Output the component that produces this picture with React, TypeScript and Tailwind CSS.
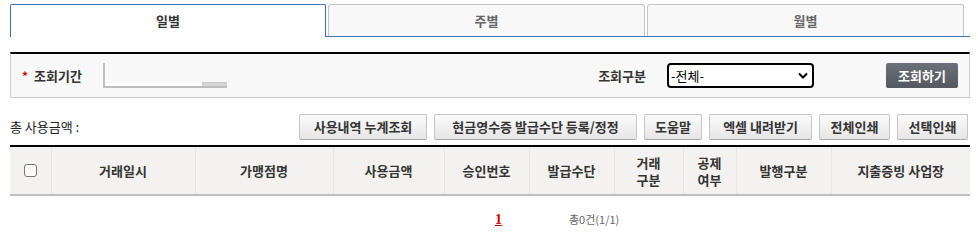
import React from 'react';

const FONT = '"Noto Sans CJK KR", "Noto Sans", sans-serif';

const tabs = [
  { label: '일별', active: true },
  { label: '주별', active: false },
  { label: '월별', active: false },
];

const actions = [
  { label: '사용내역 누계조회', w: 'w-[128px]' },
  { label: '현금영수증 발급수단 등록/정정', w: 'w-[203px]' },
  { label: '도움말', w: 'w-[58px]' },
  { label: '엑셀 내려받기', w: 'w-[103px]' },
  { label: '전체인쇄', w: 'w-[71px]' },
  { label: '선택인쇄', w: 'w-[71px]' },
];

const columns = [
  { label: '거래일시', w: 'w-[144px]' },
  { label: '가맹점명', w: 'w-[138px]' },
  { label: '사용금액', w: 'w-[111px]' },
  { label: '승인번호', w: 'w-[85px]' },
  { label: '발급수단', w: 'w-[85px]' },
  { label: '거래\n구분', w: 'w-[69px]' },
  { label: '공제\n여부', w: 'w-[53px]' },
  { label: '발행구분', w: 'w-[95px]' },
  { label: '지출증빙 사업장', w: 'w-[139px]' },
];

export default function App() {
  return (
    <div className="w-[978px] h-[240px] bg-white pl-[10px] pr-[8px] pt-[4px] text-[#333]" style={{ fontFamily: FONT }}>
      {/* tabs */}
      <div className="flex gap-[2px] border-b border-[#3f72b5] h-[33px]">
        {tabs.map((t) => (
          <div
            key={t.label}
            className={
              t.active
                ? 'w-[316px] h-[33px] flex items-center justify-center rounded-t-[2px] border border-b-0 border-[#3f72b5] bg-white text-[13px] font-bold text-[#333]'
                : 'w-[317px] h-[32px] flex items-center justify-center rounded-t-[3px] border border-b-0 border-[#c4c4c4] bg-[#f8f8f8] text-[13px] font-bold text-[#666]'
            }
          >
            {t.label}
          </div>
        ))}
      </div>

      {/* search box */}
      <div className="mt-[15px] h-[46px] border-t-2 border-t-black border-x border-b border-[#cccccc] bg-[#f8f8f8] flex items-center pl-[11px] pr-[11px]">
        <span className="text-[#d40000] text-[12px] font-bold leading-none mr-[6px]">*</span>
        <span className="text-[13px] font-bold text-[#333]">조회기간</span>
        <div className="ml-[21px] w-[124px] h-[25px] border-l-2 border-b-2 border-[#bdbdbd] flex items-end">
          <div className="flex-1 h-[3px] bg-white" />
          <div className="w-[25px] h-[4px] bg-[#d4d4d4] border-t border-[#c8c8c8]" />
        </div>
        <div className="flex-1" />
        <span className="text-[13px] font-bold text-[#333]">조회구분</span>
        <div className="ml-[21px] w-[147px] h-[25px] rounded-[4px] border-2 border-black bg-white flex items-center pl-[2px] pr-[4px]">
          <span className="flex-1 text-[13px] text-black">-전체-</span>
          <svg width="10" height="7" viewBox="0 0 10 7" className="text-black">
            <path d="M1 1.5 L5 5.5 L9 1.5" fill="none" stroke="currentColor" strokeWidth="2" />
          </svg>
        </div>
        <button className="ml-[72px] w-[72px] h-[25px] rounded-[2px] bg-gradient-to-b from-[#6b7079] to-[#545860] text-white text-[13px] font-bold">
          조회하기
        </button>
      </div>

      {/* action row */}
      <div className="mt-[15px] flex items-center h-[27px] pr-[2px]">
        <span className="text-[13px] text-[#222]">총 사용금액 :</span>
        <div className="flex-1" />
        <div className="flex gap-[7px]">
          {actions.map((a) => (
            <button
              key={a.label}
              className={`${a.w} h-[26px] rounded-[2px] border border-[#c6c6c6] border-b-[#a8a8a8] bg-gradient-to-b from-[#fbfbfb] to-[#e6e6e6] text-[13px] font-bold text-[#333] whitespace-nowrap`}
            >
              {a.label}
            </button>
          ))}
        </div>
      </div>

      {/* table */}
      <table className="mt-[5px] w-[960px] border-collapse table-fixed">
        <thead>
          <tr className="h-[49px] bg-[#f3f2f0] border-t-2 border-t-black border-b-2 border-b-[#bfbfbf]">
            <th className="w-[41px] border-r border-[#e6e6e6]">
              <div className="mx-auto w-[13px] h-[13px] rounded-[3px] border border-[#767676] bg-white" />
            </th>
            {columns.map((c, i) => (
              <th
                key={c.label}
                className={`${c.w} ${i < columns.length - 1 ? 'border-r border-[#e6e6e6]' : ''} text-[13px] font-bold text-[#333] leading-[17px] whitespace-pre-line`}
              >
                {c.label}
              </th>
            ))}
          </tr>
        </thead>
      </table>

      {/* paging */}
      <div className="mt-[14px] flex items-center pl-[485px] h-[18px]">
        <span className="text-[14px] font-bold text-[#d40000] underline" style={{ fontFamily: '"Liberation Serif", serif' }}>1</span>
        <span className="ml-[67px] text-[11px] text-[#666]">총0건(1/1)</span>
      </div>
    </div>
  );
}
